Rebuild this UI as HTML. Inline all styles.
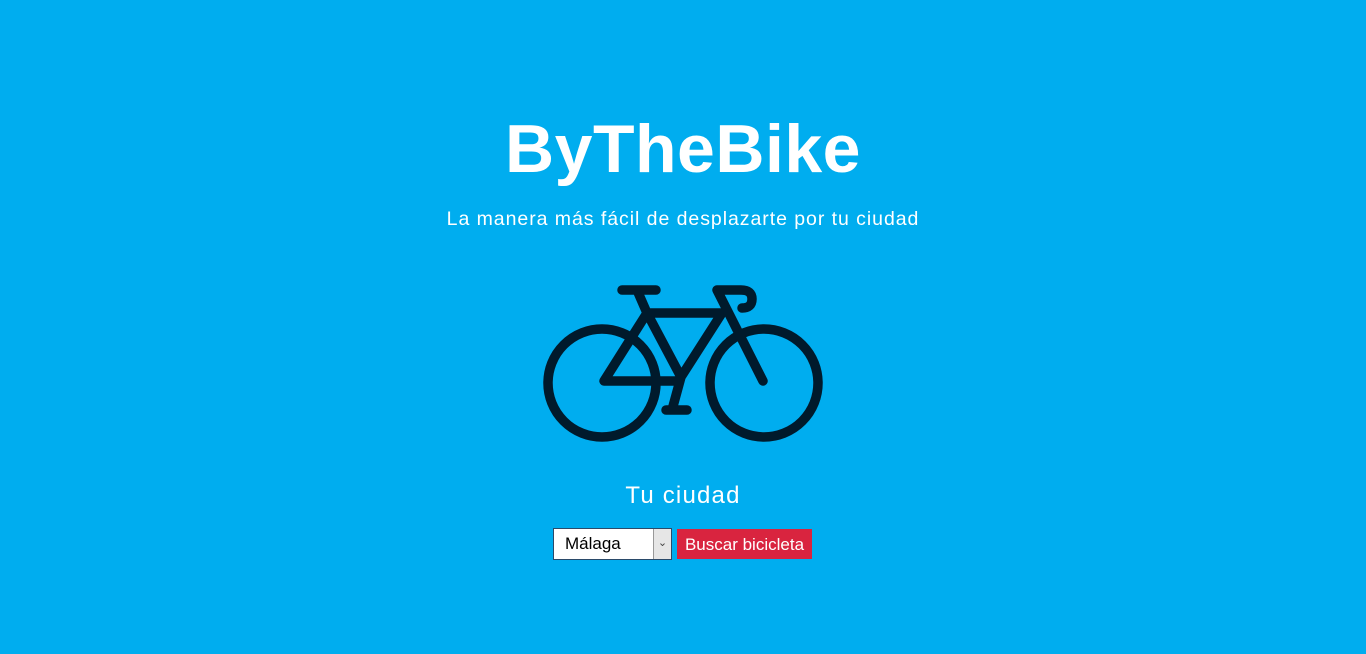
<!DOCTYPE html>
<html><head><meta charset="utf-8"><style>
html,body{margin:0;padding:0;width:1366px;height:654px;background:#00adef;overflow:hidden;font-family:"Liberation Sans",sans-serif;color:#fff}
.t{position:absolute;left:0;width:1366px;text-align:center;white-space:nowrap}
h1{margin:0;font-size:68px;font-weight:bold;top:109px;line-height:80px;letter-spacing:0.5px}
.sub{top:207px;font-size:19.5px;line-height:24px;letter-spacing:0.95px}
.city{top:481px;font-size:24px;line-height:30px;letter-spacing:1.2px}
svg{position:absolute;left:0;top:0}
.sel{position:absolute;left:553px;top:528px;width:119px;height:32px;background:#fff;border:1px solid #2a4a6a;box-sizing:border-box;color:#000;font-size:17px;line-height:30px;padding-left:11px}
.arr{position:absolute;right:0;top:0;width:17px;height:30px;background:#e6e6e6;border-left:1px solid #999;font-size:11px;text-align:center;color:#444;line-height:28px}
.btn{position:absolute;left:677px;top:529px;width:135px;height:30px;background:#d9243f;color:#fff;font-size:17px;line-height:31px;text-align:center}
</style></head><body>
<h1 class="t">ByTheBike</h1>
<div class="t sub">La manera más fácil de desplazarte por tu ciudad</div>
<svg width="1366" height="654" fill="none" stroke="#001a2c" stroke-width="9.5" stroke-linecap="round" stroke-linejoin="round">
<circle cx="602" cy="383" r="54"/>
<circle cx="764" cy="383" r="54"/>
<path d="M622 290H656M637 290L647 313H722M647 313L604 381H678M647 313L681 377L722 313M681 377L672 410M666 410H687"/>
<path d="M763 381L717 290H741Q752 290 752 299Q752 308 742 308"/>
</svg>
<div class="t city">Tu ciudad</div>
<div class="sel">Málaga<div class="arr">⌄</div></div>
<div class="btn">Buscar bicicleta</div>
</body></html>
